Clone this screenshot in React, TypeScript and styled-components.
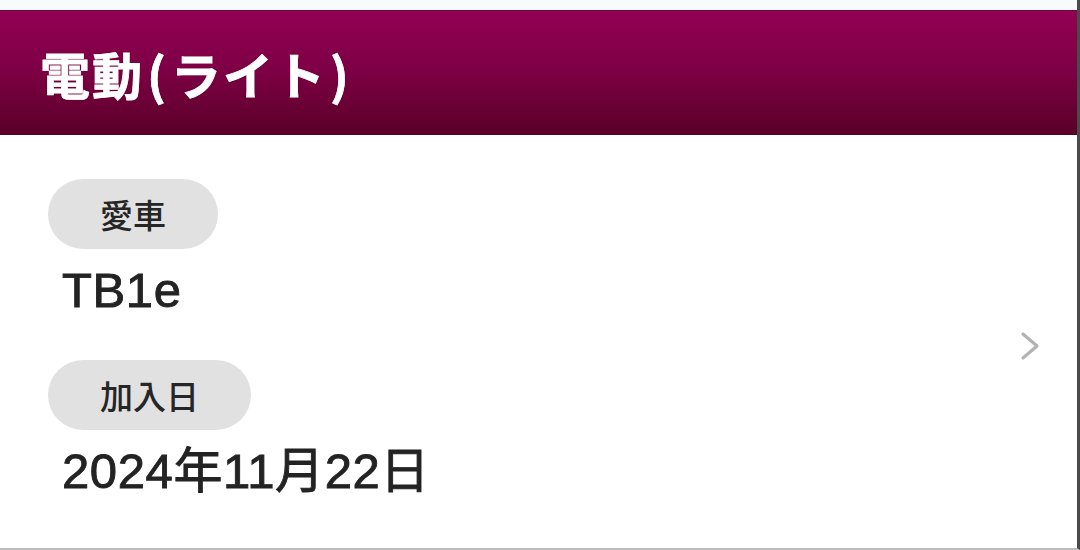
import React from "react";
import styled, { createGlobalStyle } from "styled-components";

const Global = createGlobalStyle`
  html, body { margin: 0; padding: 0; background: #ffffff; }
  * { box-sizing: border-box; }
`;

const Screen = styled.div`
  width: 1080px;
  height: 550px;
  display: flex;
  flex-direction: column;
  background: #ffffff;
  border-right: 3px solid #4a4a4a;
  border-bottom: 2px solid #bdbdbd;
  overflow: hidden;
`;

const TopStrip = styled.div`
  height: 10px;
  flex: none;
  background: #f7fbfb;
`;

const Header = styled.header`
  height: 125px;
  flex: none;
  display: flex;
  align-items: center;
  padding-left: 40px;
  background: linear-gradient(180deg, #930053 0%, #7c0044 50%, #5a0027 100%);
  border-top: 1px solid #6c0a3c;
`;

const Title = styled.h1`
  margin: 0;
  font-family: "Noto Sans CJK JP", "Noto Sans", sans-serif;
  font-weight: 700;
  font-size: 50px;
  line-height: 1;
  color: #ffffff;
  letter-spacing: 2px;
  -webkit-text-stroke: 0.8px #ffffff;
  text-shadow: 0 0 2px rgba(60, 0, 30, 0.6);
`;

const Paren = styled.span`
  margin: 0 3px;
`;

const Body = styled.div`
  flex: 1;
  display: flex;
  align-items: center;
  padding: 0 34px 0 48px;
`;

const Fields = styled.div`
  flex: 1;
  display: flex;
  flex-direction: column;
  padding-bottom: 5px;
`;

const Field = styled.div<{ $first?: boolean }>`
  display: flex;
  flex-direction: column;
  align-items: flex-start;
  margin-top: ${(p) => (p.$first ? "0" : "42px")};
`;

const Pill = styled.div`
  height: 70px;
  display: flex;
  align-items: center;
  justify-content: center;
  padding: 0 52px;
  border-radius: 35px;
  background: #e1e1e1;
  font-family: "Noto Sans CJK JP", sans-serif;
  font-weight: 500;
  font-size: 33px;
  color: #262626;
`;

const Value = styled.div`
  margin-top: 13px;
  padding-left: 14px;
  font-family: "Liberation Sans", "Noto Sans CJK JP", sans-serif;
  font-size: 49px;
  line-height: 56px;
  letter-spacing: 0.6px;
  color: #232323;
  -webkit-text-stroke: 0.9px #232323;
`;

const Chevron = styled.svg`
  width: 24px;
  height: 30px;
  flex: none;
  margin-top: 8px;
`;

export default function App() {
  return (
    <>
      <Global />
      <Screen>
        <TopStrip />
        <Header>
          <Title>
            電動<Paren>(</Paren>ライト<Paren>)</Paren>
          </Title>
        </Header>
        <Body>
          <Fields>
            <Field $first>
              <Pill>愛車</Pill>
              <Value>TB1e</Value>
            </Field>
            <Field>
              <Pill>加入日</Pill>
              <Value>2024年11月22日</Value>
            </Field>
          </Fields>
          <Chevron viewBox="0 0 24 30">
            <polyline
              points="4,3 18,15 4,27"
              fill="none"
              stroke="#b3b3b3"
              strokeWidth="3.2"
              strokeLinecap="round"
              strokeLinejoin="round"
            />
          </Chevron>
        </Body>
      </Screen>
    </>
  );
}
